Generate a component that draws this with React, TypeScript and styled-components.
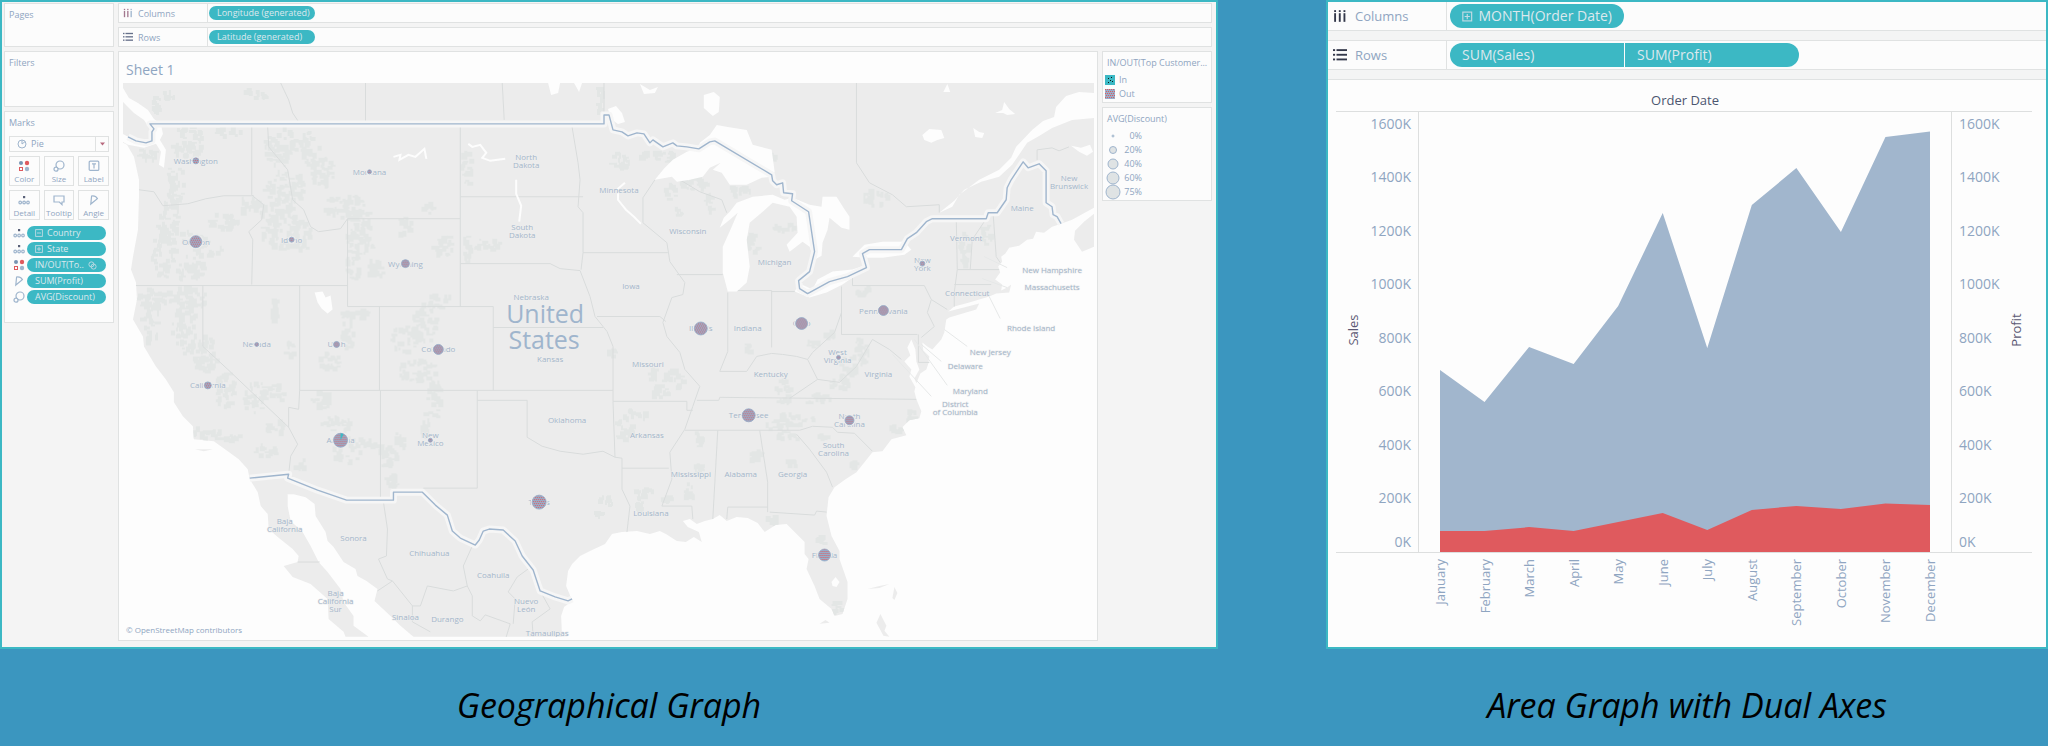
import React from "react";
import styled, { createGlobalStyle } from "styled-components";

const c = {
  page: "#3b96bf",
  teal: "#3cb8c4",
  steel: "#9fb5cd",
  text: "#8fa5c1",
  red: "#df5a5e",
  line: "#e0e2e2",
  chrome: "#f4f4f4",
  card: "#fcfcfc",
  land: "#ececec",
  relief: "#e3e6e5",
  border: "#d9dcdc",
};

const GlobalStyle = createGlobalStyle`
  * { box-sizing: border-box; }
  body {
    margin: 0;
    background: ${c.page};
    font-family: "Open Sans", "Noto Sans", sans-serif;
    color: ${c.text};
  }
  button, select { font: inherit; color: inherit; }
`;

/* ---------- page ---------- */

const Page = styled.main`
  display: grid;
  grid-template-columns: minmax(0, 1218fr) minmax(0, 722fr);
  column-gap: 108px;
  min-height: 100vh;
  align-content: start;
`;

const Figure = styled.figure`
  margin: 0;
  display: flex;
  flex-direction: column;
`;

const Caption = styled.figcaption`
  padding: 32px 0 16px;
  text-align: center;
  font-size: 34px;
  line-height: 48px;
  font-style: italic;
  color: #000;
`;

const Workbook = styled.div`
  flex: 1;
  display: flex;
  gap: 4px;
  padding: 1px 4px 6px 2px;
  border: 2px solid ${c.teal};
  background: ${c.chrome};
`;

/* ---------- side bar ---------- */

const SideBar = styled.aside`
  width: 110px;
  flex: none;
  display: flex;
  flex-direction: column;
  gap: 4px;
`;

const Card = styled.section<{ $height?: number }>`
  min-height: ${(p) => p.$height ?? 0}px;
  border: 1px solid ${c.line};
  background: ${c.card};
  padding: 4px;
`;

const CardTitle = styled.h2`
  margin: 0;
  font-size: 9px;
  line-height: 14px;
  font-weight: 400;
  white-space: nowrap;
`;

const MarkType = styled.label`
  display: flex;
  align-items: center;
  height: 16px;
  margin-top: 6px;
  border: 1px solid ${c.line};
  padding-left: 7px;
`;

const MarkSelect = styled.select`
  flex: 1;
  appearance: none;
  border: 0;
  background: transparent;
  padding: 0 4px;
  font-size: 9px;
  line-height: 14px;
`;

const DropArrow = styled.span`
  width: 13px;
  height: 14px;
  display: grid;
  place-items: center;
  border-left: 1px solid ${c.line};
`;

const MarkGrid = styled.div`
  display: grid;
  grid-template-columns: repeat(3, 1fr);
  gap: 4px;
  margin: 4px 0 6px;
`;

const MarkButton = styled.button`
  height: 30px;
  padding: 3px 0 0;
  border: 1px solid ${c.line};
  background: ${c.card};
  display: flex;
  flex-direction: column;
  align-items: center;
  gap: 1px;
  font-size: 8px;
  line-height: 12px;
`;

const FieldList = styled.ul`
  list-style: none;
  margin: 0;
  padding: 0 3px 0 4px;
  display: flex;
  flex-direction: column;
  gap: 2px;
`;

const FieldRow = styled.li`
  display: grid;
  grid-template-columns: 12px 1fr;
  gap: 2px;
  align-items: center;
`;

const Pill = styled.button<{ $big?: boolean; $width?: number; $side?: "left" | "right" }>`
  height: ${(p) => (p.$big ? 24 : 14)}px;
  width: ${(p) => (p.$width ? `${p.$width}px` : "100%")};
  padding: 0 ${(p) => (p.$big ? 12 : 8)}px;
  border: 0;
  border-radius: ${(p) =>
    p.$side === "left" ? "12px 0 0 12px" : p.$side === "right" ? "0 12px 12px 0" : "12px"};
  background: ${c.teal};
  color: #dce8ee;
  display: flex;
  align-items: center;
  gap: ${(p) => (p.$big ? 6 : 4)}px;
  font-size: ${(p) => (p.$big ? 14 : 9)}px;
  line-height: 14px;
  white-space: nowrap;
  text-align: left;
`;

/* ---------- shelves ---------- */

const Main = styled.div`
  flex: 1;
  min-width: 0;
  display: flex;
  flex-direction: column;
  gap: 4px;
`;

const Shelf = styled.div<{ $big?: boolean }>`
  height: ${(p) => (p.$big ? 29 : 20)}px;
  display: flex;
  align-items: center;
  border: solid ${c.line};
  border-width: ${(p) => (p.$big ? "0 0 1px" : "1px")};
  background: ${c.card};
`;

const ShelfName = styled.div<{ $big?: boolean }>`
  width: ${(p) => (p.$big ? 119 : 89)}px;
  height: 100%;
  flex: none;
  display: flex;
  align-items: center;
  gap: ${(p) => (p.$big ? 8 : 5)}px;
  padding-left: ${(p) => (p.$big ? 5 : 4)}px;
  margin-right: ${(p) => (p.$big ? 3 : 1)}px;
  border-right: 1px solid ${c.line};
  font-size: ${(p) => (p.$big ? 13 : 9)}px;
`;

const Body = styled.div`
  display: flex;
  gap: 4px;
  flex: 1;
`;

const Sheet = styled.section`
  flex: 1;
  min-width: 0;
  border: 1px solid ${c.line};
  background: #fdfdfd;
  padding: 0 3px 3px;
`;

const SheetTitle = styled.h1`
  margin: 0;
  padding: 8px 4px 2px;
  font-size: 14px;
  line-height: 20px;
  font-weight: 400;
`;

const Drawing = styled.svg`
  display: block;
  width: 100%;
  height: auto;
  font-family: "Open Sans", "Noto Sans", sans-serif;
`;

const Legends = styled.aside`
  width: 110px;
  flex: none;
  display: flex;
  flex-direction: column;
  gap: 4px;
`;

const LegendCard = styled(Card)`
  padding: 4px 1px 1px 4px;
`;

const LegendRows = styled.ul`
  list-style: none;
  margin: 3px 0 0;
  padding: 0;
`;

const LegendRow = styled.li`
  height: 14px;
  display: flex;
  align-items: center;
  font-size: 9px;
  line-height: 14px;
`;

const Swatch = styled.svg`
  width: 10px;
  height: 10px;
  margin: 0 4px 0 -2px;
`;

const SizeDot = styled.svg`
  width: 16px;
  height: 16px;
  margin-left: -2px;
  flex: none;
`;

const SizeValue = styled.span`
  width: 21px;
  text-align: right;
`;

/* ---------- area chart card ---------- */

const ChartCard = styled.div`
  flex: 1;
  display: flex;
  flex-direction: column;
  border: 2px solid ${c.teal};
  background: #fdfdfd;
`;

const ShelfGap = styled.div`
  height: 10px;
  background: ${c.chrome};
  border-bottom: 1px solid ${c.line};
`;

const PillJoin = styled.div`
  display: flex;
  gap: 1px;
`;

/* ---------- icons ---------- */

const ink = { fill: "none", stroke: c.steel, strokeWidth: 1.2 } as const;

function ColumnsIcon({ big }: { big?: boolean }) {
  const s = big ? 14 : 10;
  return (
    <svg width={s} height={s} viewBox="0 0 12 12">
      {[2, 6, 10].map((x, i) => (
        <g key={x} fill={big ? "#33384a" : i === 2 ? c.steel : "#a3788f"}>
          <rect x={x - 1} y="1" width="1.6" height="1.6" />
          <rect x={x - 1} y="3.6" width="1.6" height="7.4" />
        </g>
      ))}
    </svg>
  );
}

function RowsIcon({ big }: { big?: boolean }) {
  const s = big ? 14 : 10;
  return (
    <svg width={s} height={s} viewBox="0 0 12 12">
      {[2, 6, 10].map((y) => (
        <g key={y} fill={big ? "#33384a" : "#66708a"}>
          <rect x="0" y={y - 1} width="1.8" height="1.6" />
          <rect x="3" y={y - 1} width="9" height="1.6" />
        </g>
      ))}
    </svg>
  );
}

function ColorIcon() {
  return (
    <svg width="12" height="12" viewBox="0 0 12 12">
      <circle cx="3" cy="3" r="2" fill="#7794b3" />
      <circle cx="9" cy="3" r="2.2" fill={c.red} />
      <rect x="1.5" y="7.5" width="3" height="3" fill="none" stroke={c.red} />
      <circle cx="9" cy="9" r="2.2" fill={c.steel} />
    </svg>
  );
}

function SizeIcon() {
  return (
    <svg width="12" height="12" viewBox="0 0 12 12" {...ink}>
      <circle cx="7" cy="5" r="4" />
      <circle cx="3" cy="9.2" r="2" fill={c.card} />
    </svg>
  );
}

function LabelIcon() {
  return (
    <svg width="12" height="12" viewBox="0 0 12 12" {...ink}>
      <rect x="1.2" y="1.2" width="9.6" height="9.2" rx="1" />
      <path d="M4 3.8h4M6 3.8v4.6" />
    </svg>
  );
}

function DetailIcon() {
  return (
    <svg width="12" height="12" viewBox="0 0 12 12" {...ink}>
      <rect x="5" y="2" width="2.2" height="2.2" fill="#5a6178" stroke="none" />
      <circle cx="2.2" cy="8.5" r="1.3" />
      <circle cx="6.1" cy="8.5" r="1.3" />
      <circle cx="10" cy="8.5" r="1.3" />
    </svg>
  );
}

function TooltipIcon() {
  return (
    <svg width="12" height="12" viewBox="0 0 12 12" {...ink}>
      <path d="M1 2h10v6H9v2.6L6.4 8H1z" />
    </svg>
  );
}

function AngleIcon() {
  return (
    <svg width="12" height="12" viewBox="0 0 12 12" {...ink}>
      <path d="M3.6 2 Q7.6 1.4 9.4 4.6 L2.8 10z" />
    </svg>
  );
}

function PieIcon() {
  return (
    <svg width="10" height="10" viewBox="0 0 12 12" {...ink}>
      <circle cx="6" cy="6" r="4.8" />
      <path d="M6 1.2V6l3.6-2.8" />
    </svg>
  );
}

function ExpandIcon({ size = 8, minus }: { size?: number; minus?: boolean }) {
  return (
    <svg width={size} height={size} viewBox="0 0 10 10" fill="none" stroke="#c3dbe4" strokeWidth="1.1">
      <rect x=".8" y=".8" width="8.4" height="8.4" />
      <path d={minus ? "M2.5 5h5" : "M2.5 5h5M5 2.5v5"} />
    </svg>
  );
}

function SetIcon() {
  return (
    <svg width="9" height="9" viewBox="0 0 10 10" fill="none" stroke="#c3dbe4">
      <circle cx="3.8" cy="3.8" r="2.8" />
      <circle cx="6.2" cy="6.2" r="2.8" />
    </svg>
  );
}

/* ---------- map data ---------- */

const LAND =
  "M122 83H1095V208L1073 220 1062 224 1053 227 1045 233 1037 232 1034 239 1028 240 1020 246 1010 248 1006 254 1002 257 1003 262 999 267 1001 273 996 280 1003 285 1002 291 1008 288 1012 285 1010 293 997 294 990 297 970 303 955 307 949 312 980 304 977 310 950 318 947 320 945 333 942 340 933 350 928 347 923 343 924 351 930 357 929 364 927 370 921 374 917 384 915 379 920 370 917 362 916 350 912 340 908 348 911 356 905 362 912 370 910 377 916 388 915 392 917 400 922 412 920 419 910 421 903 428 907 436 892 440 883 452 873 453 865 463 857 473 846 480 835 488 829 498 827 517 832 537 840 552 840 560 848 583 848 600 843 615 835 617 832 610 820 600 815 587 807 570 809 560 805 555 805 543 797 535 787 525 776 526 765 533 758 524 748 519 737 518 727 522 720 516 713 520 705 522 697 525 690 520 683 522 688 528 699 533 702 543 694 538 686 543 677 542 666 535 660 532 650 535 637 532 622 533 612 535 605 545 590 552 580 557 572 565 568 572 566 587 569 594 572 602 564 608 561 617 562 638H413L400 627 390 617 374 602 377 590 366 582 357 577 355 570 343 563 333 548 327 542 325 533 315 517 314 505 305 498 293 495 287 495 287 507 290 522 302 533 310 547 318 563 327 573 340 590 343 603 353 617 353 627 368 638H345L343 633 328 620 327 600 310 585 292 578 283 567 297 563 298 557 292 550 277 538 268 530 267 515 260 507 257 493 249 480 247 470 238 460 227 452 213 442 193 440 192 427 182 417 173 403 173 393 165 380 155 367 143 347 142 337 132 320 136 300 135 283 130 270 132 257 137 230 138 197 138 180 133 157 126 145 122 143Z";

const WATER = [
  "M122 88 128 98 137 103 147 110 153 119 160 124 162 134 159 140 165 150 163 168 158 165 160 152 155 144 143 148 127 145 122 142 122 134 131 139 145 141 150 138 149 129 143 120 133 113 122 102Z",
  "M655 180 664 169 673 160 687 152 699 148 700 143 710 135 717 125 728 127 747 130 753 145 772 150 775 172 772 177 762 178 747 185 730 185 722 173 713 170 721 163 710 168 703 177 690 180 677 182 672 177Z",
  "M720 228 724 218 730 212 737 203 753 197 773 195 785 200 793 198 810 205 822 207 823 197 837 197 844 208 850 217 850 230 842 228 830 218 828 230 823 243 822 256 815 260 810 247 803 242 790 252 787 245 798 233 797 217 790 207 773 203 763 212 750 223 747 240 750 267 747 283 737 292 728 292 723 273 723 247 732 227 738 213 730 220Z",
  "M795 292 800 284 813 290 818 280 833 272 853 270 868 265 862 272 843 285 827 293 810 298Z",
  "M853 257 865 245 883 242 905 242 912 250 905 255 883 258 867 258Z",
  "M1095 93 1080 92 1067 96 1057 107 1055 117 1044 121 1033 130 1017 147 1012 158 1000 170 980 180 960 195 953 207 940 213 955 201 965 190 982 182 1000 177 1013 165 1028 143 1040 136 1053 128 1073 120 1095 118Z",
  "M704 95 714 92 720 97 719 112 713 116 704 108Z",
  "M608 109 616 106 622 113 625 122 618 124 611 119Z",
  "M548 83H560L558 93 551 95Z",
  "M574 83H582L579 92Z",
  "M640 84 650 90 658 87 655 93 644 94Z",
  "M314 293 322 292 325 298 330 296 332 310 327 314 321 309 317 303Z",
  "M832 583 836 578 840 583 837 588 833 587Z",
  "M923 135 930 129 942 130 945 138 938 140 932 143 925 140Z",
  "M974 128 980 132 985 133 983 138 976 137Z",
  "M996 113 1003 110 1005 102 1010 109 1016 114 1008 115 1004 113Z",
  "M944 92 948 84 951 92Z",
  "M1072 146 1082 148 1091 145 1094 152 1088 156 1080 152Z",
];

const ISLANDS = [
  "M1095 214 1085 222 1076 231 1075 240 1083 252 1095 247Z",
  "M877 624 881 615 887 627 885 632 890 638 884 637Z",
  "M868 590 880 587 890 585 880 589Z",
  "M895 588 898 594 895 601 893 599Z",
  "M820 625 826 621 830 624Z",
  "M194 450 212 450 203 452Z",
];

const RIVERS = [
  "M393 157 400 155 399 160 408 155 415 157 424 149 426 159",
  "M468 144 472 147 480 145 486 153 482 158 490 161 505 159",
  "M516 180V194L521 206 519 222",
  "M625 183 618 189 618 200 626 210 634 217 641 224",
];

const STATE_LINES = [
  "M251 127V195L253 197 263 205 261 220 248 232 252 240 251 285",
  "M138 190 153 192 162 206 187 204 205 199 223 196H253",
  "M135 286H347",
  "M202 286V347L227 370 288 428 297 445 290 457 288 475",
  "M288 428V408L298 410 299 391V286",
  "M299 391H613",
  "M380 391V501M379 307V391",
  "M347 307V219H460M460 127V307M347 307H493V391",
  "M267 127 268 147 287 170 292 200 303 210 310 227 318 232 340 229 347 219",
  "M460 197H583M460 264H550L560 269 580 271 590 297 595 317 607 332 613 347V402",
  "M493 328H603",
  "M613 402 615 458 622 459V490L630 507 627 533",
  "M572 127 578 163 580 180 578 207 583 213V253L581 270",
  "M583 253H668M597 317H660L666 322",
  "M655 180 643 198 643 223 667 243 670 262 685 283 683 295 672 298 663 323 667 337 680 353 685 370 700 387 693 407 685 430 670 453 672 480 662 507H692L693 520",
  "M677 275H723M680 180 700 192 722 200 727 213",
  "M728 293V352L720 372 747 372 757 357 772 354 783 355 797 357 808 360 813 353 835 333 842 313",
  "M737 291H772V348M772 292H797",
  "M842 287V335H918M853 272V286H925L932 300 928 313 935 327 922 338",
  "M932 300 948 310M919 335V363H930",
  "M957 220 958 270 955 293V307M987 219 973 240 971 270M958 270H1000M955 285H992M994 215 997 257 1001 263",
  "M697 401H719L720 398 917 400M685 431H800",
  "M818 380 790 399M818 380 808 360M818 380 840 383 857 367 873 340 890 350 902 360",
  "M613 402H687V411H693M622 469H669",
  "M718 431 713 520M760 431 768 483V513M727 520 728 508H768",
  "M770 513 815 516 817 512 827 513",
  "M797 435 810 450 827 473 833 488M800 431 813 427 833 428 838 433 855 434 873 452",
  "M423 489H477V391M477 401H527V438L542 447 560 452 583 455 603 452 615 458",
  "M365 83V123M502 83 504 120M280 83 288 100 292 113 298 122M604 83V115",
  "M857 83V163L870 183 893 195 907 207 940 205V213",
  "M1038 160V150L1053 148 1060 151 1070 147",
  "M383 503 387 530 386 557 378 560 387 580 392 582 377 592M392 582 412 607 412 623 430 633M412 607H420L427 587 453 592 467 587",
  "M472 547 463 567 467 587 472 597V617L480 622 485 616 510 625 506 638",
  "M528 570 517 578 508 593 515 600 513 625M540 592 550 610 532 623 533 638M297 563H319",
];

const LEADERS = "M985 257 1008 268M983 279 1008 288M990 297 1001 319M945 330 968 347M922 345 942 362M915 340 948 386M893 355 932 397";

const NATIONAL = [
  "M127 137 135 141 145 143 151 141V132L153 129 149 124H604V115H609L613 130 622 132 628 136 637 133 644 134 650 143 653 140 663 147 673 143 677 146 687 147 699 149 710 142 715 141 772 175 773 181 777 185 783 183 784 193 793 194 792 201 809 212 815 252 810 272 799 281 800 289 808 294 830 282 848 277 867 268 863 254 870 250H902L908 239 917 233 927 222 933 219H987L989 213 998 213 1007 200 1008 188 1012 180 1024 162 1029 168 1040 164 1047 171V203L1053 207 1054 215 1058 217 1062 224",
  "M249 479 288 475 287 479 317 491 346 501H393V493H422L435 506 447 516 452 532 460 539 475 546 479 541 483 532 489 530 503 531 515 542 522 557 533 571 540 592 555 598 568 602 572 600",
];

/* Wooded and mountain areas: centre x, centre y, half width, half height */
const RELIEF: number[][] = [
  [187, 143, 17, 17], [175, 185, 9, 20], [167, 220, 11, 24], [163, 255, 12, 25], [190, 270, 14, 14], [147, 155, 9, 8],
  [150, 300, 13, 11], [185, 298, 24, 11], [185, 330, 13, 24], [205, 355, 15, 18], [225, 390, 10, 20], [255, 398, 12, 16],
  [150, 320, 9, 24], [228, 132, 12, 5], [280, 148, 17, 19], [285, 190, 20, 20], [280, 225, 20, 28], [250, 207, 12, 10],
  [310, 148, 10, 19], [322, 172, 12, 16], [345, 207, 22, 11], [300, 235, 12, 18], [222, 222, 16, 9], [190, 238, 14, 6],
  [207, 250, 14, 8], [360, 238, 14, 22], [353, 268, 7, 14], [375, 268, 10, 10], [405, 227, 8, 10], [442, 245, 12, 12],
  [355, 215, 18, 5], [425, 325, 13, 20], [405, 340, 13, 14], [440, 302, 12, 7], [418, 372, 20, 11], [357, 315, 17, 4],
  [348, 330, 7, 20], [330, 362, 11, 10], [276, 312, 4, 12], [290, 350, 5, 10], [277, 393, 8, 10], [275, 427, 9, 9],
  [321, 400, 10, 9], [336, 425, 15, 8], [347, 452, 13, 13], [300, 465, 5, 6], [367, 445, 13, 5], [388, 458, 10, 14],
  [436, 400, 8, 20], [402, 440, 9, 9], [392, 482, 7, 9], [425, 428, 4, 16], [205, 435, 16, 6], [230, 440, 13, 4],
  [265, 452, 14, 5], [467, 170, 6, 17], [488, 245, 14, 6], [467, 250, 4, 15], [621, 162, 10, 10], [665, 157, 13, 6],
  [645, 157, 6, 4], [671, 192, 6, 9], [696, 184, 15, 8], [710, 205, 4, 11], [679, 213, 4, 4], [740, 192, 10, 6],
  [754, 243, 7, 12], [785, 228, 10, 5], [876, 199, 13, 8], [774, 158, 3, 5], [600, 100, 4, 14], [865, 293, 7, 6],
  [862, 352, 8, 14], [848, 370, 9, 12], [784, 393, 8, 13], [795, 420, 20, 6], [780, 426, 13, 6], [818, 400, 14, 5],
  [838, 386, 12, 5], [675, 380, 11, 9], [660, 393, 9, 7], [625, 430, 9, 13], [637, 415, 10, 6], [606, 502, 7, 6],
  [600, 516, 6, 4], [645, 495, 9, 7], [640, 508, 6, 5], [667, 500, 6, 4], [699, 470, 7, 5], [690, 492, 5, 9],
  [699, 440, 5, 7], [757, 457, 6, 7], [792, 465, 5, 4], [790, 437, 12, 5], [774, 522, 8, 5], [822, 541, 6, 5],
  [838, 609, 6, 6], [856, 466, 5, 4], [825, 437, 4, 5], [965, 250, 5, 20], [988, 235, 5, 12], [912, 417, 6, 5],
  [897, 431, 7, 4], [157, 105, 5, 9], [169, 95, 6, 4], [247, 91, 4, 4], [260, 96, 7, 5], [428, 208, 6, 6],
  [814, 345, 6, 5], [830, 336, 4, 5], [748, 350, 4, 6], [613, 355, 5, 4], [654, 375, 5, 6],
];

/* Builds one area from small overlapping patches, so that its edge is broken */
function patches([x, y, rx, ry]: number[], seed: number) {
  let s = seed * 7919 + 17;
  const next = () => {
    s = (s * 16807) % 2147483647;
    return s / 2147483647;
  };
  next();
  const count = Math.round((rx * ry) / 6) + 5;
  let d = "";
  for (let i = 0; i < count; i++) {
    const a = next() * Math.PI * 2;
    const k = Math.sqrt(next());
    const w = 2 + Math.round(next() * 4);
    const h = 2 + Math.round(next() * 4);
    const left = Math.round(x + Math.cos(a) * rx * k - w / 2);
    const top = Math.round(y + Math.sin(a) * ry * k - h / 2);
    d += `M${left} ${top}h${w}v${h}h${-w}z`;
  }
  return d;
}

const RELIEF_PATH = RELIEF.map((r, i) => patches(r, i + 1)).join("");

type Place = [number, number, ...string[]];

const PLACES: Place[] = [
  [195, 161, "Washington"], [369, 172, "Montana"], [195, 242, "Oregon"], [291, 240, "Idaho"], [405, 264, "Wyoming"],
  [256, 345, "Nevada"], [336, 345, "Utah"], [438, 350, "Colorado"], [207, 386, "California"], [340, 441, "Arizona"],
  [430, 440, "New", "Mexico"], [539, 503, "Texas"], [701, 329, "Illinois"], [802, 324, "Ohio"], [884, 311, "Pennsylvania"],
  [838, 357, "West", "Virginia"], [923, 264, "New", "York"], [749, 416, "Tennessee"], [850, 421, "North", "Carolina"],
  [825, 556, "Florida"], [526, 161, "North", "Dakota"], [619, 190, "Minnesota"], [688, 231, "Wisconsin"],
  [775, 262, "Michigan"], [631, 286, "Iowa"], [531, 297, "Nebraska"], [522, 231, "South", "Dakota"], [550, 360, "Kansas"],
  [648, 365, "Missouri"], [748, 329, "Indiana"], [771, 375, "Kentucky"], [879, 375, "Virginia"], [967, 238, "Vermont"],
  [968, 293, "Connecticut"], [1023, 208, "Maine"], [1070, 182, "New", "Brunswick"], [1053, 270, "New Hampshire"],
  [1053, 287, "Massachusetts"], [1032, 329, "Rhode Island"], [991, 353, "New Jersey"], [966, 367, "Delaware"],
  [971, 392, "Maryland"], [956, 409, "District", "of Columbia"], [567, 421, "Oklahoma"], [647, 436, "Arkansas"],
  [651, 514, "Louisiana"], [691, 475, "Mississippi"], [741, 475, "Alabama"], [793, 475, "Georgia"],
  [834, 450, "South", "Carolina"], [284, 526, "Baja", "California"], [353, 539, "Sonora"], [429, 554, "Chihuahua"],
  [493, 576, "Coahuila"], [526, 606, "Nuevo", "León"], [405, 618, "Sinaloa"], [447, 620, "Durango"],
  [335, 602, "Baja", "California", "Sur"], [547, 634, "Tamaulipas"],
];

const PIES: [number, number, number][] = [
  [195, 161, 3], [369, 172, 2], [195, 242, 6], [291, 240, 2.5], [405, 264, 4], [256, 345, 2], [336, 345, 3],
  [438, 350, 5], [207, 386, 3.5], [340, 441, 7], [430, 441, 2], [539, 503, 7], [701, 329, 6.5], [802, 324, 6],
  [884, 311, 5], [839, 358, 2], [923, 264, 2.5], [749, 416, 6.5], [850, 421, 4.5], [825, 556, 6],
];

function PieTexture() {
  return (
    <pattern id="pie" width="4" height="4" patternUnits="userSpaceOnUse">
      <rect width="4" height="4" fill="#97aecb" />
      <rect x="0" y="0" width="1" height="1" fill={c.red} />
      <rect x="2" y="0" width="1" height="1" fill={c.red} />
      <rect x="1" y="2" width="1" height="1" fill={c.red} />
      <rect x="3" y="2" width="1" height="1" fill={c.red} />
    </pattern>
  );
}

function GeoMap() {
  return (
    <Drawing viewBox="121 82 974 556" role="img" aria-label="Discount and profit by state">
      <defs>
        <PieTexture />
        <clipPath id="landClip">
          <path d={LAND} />
        </clipPath>
      </defs>
      <rect x="121" y="82" width="974" height="556" fill="#fdfdfd" />
      <path d={LAND} fill={c.land} />
      <path d={RELIEF_PATH} fill={c.relief} clipPath="url(#landClip)" />
      <g fill="none" stroke={c.border}>
        {STATE_LINES.map((d) => (
          <path key={d} d={d} />
        ))}
        <path d={LEADERS} stroke="#e6e8e8" />
      </g>
      <g fill="#fdfdfd">
        {WATER.map((d) => (
          <path key={d} d={d} />
        ))}
      </g>
      <g fill={c.land}>
        {ISLANDS.map((d) => (
          <path key={d} d={d} />
        ))}
      </g>
      <g fill="none" stroke="#fdfdfd" strokeWidth="2">
        {RIVERS.map((d) => (
          <path key={d} d={d} />
        ))}
      </g>
      <g fill="none" strokeLinejoin="round">
        {NATIONAL.map((d) => (
          <path key={d} d={d} stroke="#f6f6f6" strokeWidth="7" />
        ))}
        {NATIONAL.map((d) => (
          <path key={d} d={d} stroke={c.steel} strokeWidth="1.4" />
        ))}
      </g>
      <g fontSize="8" textAnchor="middle" fill="#a3b5c9" stroke="#efefef" strokeWidth="1" paintOrder="stroke">
        {PLACES.map(([x, y, ...lines]) =>
          lines.map((t, i) => (
            <text key={`${t}${x}`} x={x} y={y + 3 + (i - (lines.length - 1) / 2) * 8}>
              {t}
            </text>
          ))
        )}
      </g>
      <g fontSize="25" textAnchor="middle" fill={c.steel}>
        <text x="545" y="324">United</text>
        <text x="544" y="350">States</text>
      </g>
      {PIES.map(([x, y, r]) => (
        <g key={`${x}-${y}`}>
          <circle cx={x} cy={y} r={r + 1.5} fill={c.land} />
          <circle cx={x} cy={y} r={r} fill="url(#pie)" stroke="#93abc8" strokeWidth=".8" />
        </g>
      ))}
      <path d="M340 441V434A7 7 0 0 1 343 435Z" fill={c.teal} />
      <text x="125" y="634" fontSize="8" fill={c.text}>
        © OpenStreetMap contributors
      </text>
    </Drawing>
  );
}

/* ---------- area chart ---------- */

const MONTHS: [string, number, number][] = [
  ["January", 680, 78], ["February", 560, 78], ["March", 766, 93], ["April", 702, 78], ["May", 919, 112],
  ["June", 1266, 146], ["July", 762, 82], ["August", 1296, 157], ["September", 1434, 172], ["October", 1195, 161],
  ["November", 1550, 181], ["December", 1571, 176],
];
const TICKS = [0, 200, 400, 600, 800, 1000, 1200, 1400, 1600];
const BASE = 473;
const px = (i: number) => 112 + (i * 490) / 11;
const py = (v: number) => BASE - v * 0.2677;

function area(values: number[]) {
  return `M${px(0)} ${BASE}${values.map((v, i) => `L${px(i)} ${py(v)}`).join("")}L${px(11)} ${BASE}Z`;
}

function AreaChart() {
  return (
    <Drawing viewBox="0 1 718 566" role="img" aria-label="Sales and profit by month">
      <text x="357" y="26" fontSize="13" textAnchor="middle" fill="#4c5670">
        Order Date
      </text>
      <path d="M8 32.5H704M8 473.5H704M90.5 32V473M623.5 32V473" stroke="#dddfdf" strokeWidth="1" />
      <path d={area(MONTHS.map((m) => m[1]))} fill="#a1b6cd" />
      <path d={area(MONTHS.map((m) => m[2]))} fill={c.red} />
      <g fontSize="14" fill={c.text}>
        {TICKS.map((t) => {
          const y = t === 0 ? 468 : py(t) + 5;
          return (
            <g key={t}>
              <text x="83" y={y} textAnchor="end">{t}K</text>
              <text x="631" y={y}>{t}K</text>
            </g>
          );
        })}
      </g>
      <g fontSize="13" fill={c.text} textAnchor="end">
        {MONTHS.map(([name], i) => (
          <text key={name} transform={`translate(${px(i) + 5} 480) rotate(-90)`}>
            {name}
          </text>
        ))}
      </g>
      <g fontSize="13" fill="#5a5873" textAnchor="middle">
        <text transform="translate(30 251) rotate(-90)">Sales</text>
        <text transform="translate(693 251) rotate(-90)">Profit</text>
      </g>
    </Drawing>
  );
}

/* ---------- composition ---------- */

const MARK_BUTTONS: [string, React.ReactNode][] = [
  ["Color", <ColorIcon />], ["Size", <SizeIcon />], ["Label", <LabelIcon />],
  ["Detail", <DetailIcon />], ["Tooltip", <TooltipIcon />], ["Angle", <AngleIcon />],
];

function MarksCard() {
  return (
    <Card $height={212}>
      <CardTitle>Marks</CardTitle>
      <MarkType>
        <PieIcon />
        <MarkSelect aria-label="Mark type" defaultValue="Pie">
          <option>Pie</option>
        </MarkSelect>
        <DropArrow>
          <svg width="5" height="4" viewBox="0 0 5 4">
            <path d="M0 .5H5L2.5 3.5Z" fill="#b8697e" />
          </svg>
        </DropArrow>
      </MarkType>
      <MarkGrid>
        {MARK_BUTTONS.map(([name, icon]) => (
          <MarkButton key={name} type="button">
            {icon}
            {name}
          </MarkButton>
        ))}
      </MarkGrid>
      <FieldList>
        <FieldRow><DetailIcon /><Pill type="button"><ExpandIcon minus />Country</Pill></FieldRow>
        <FieldRow><DetailIcon /><Pill type="button"><ExpandIcon />State</Pill></FieldRow>
        <FieldRow><ColorIcon /><Pill type="button">IN/OUT(To.. <SetIcon /></Pill></FieldRow>
        <FieldRow><AngleIcon /><Pill type="button">SUM(Profit)</Pill></FieldRow>
        <FieldRow><SizeIcon /><Pill type="button">AVG(Discount)</Pill></FieldRow>
      </FieldList>
    </Card>
  );
}

const SIZES: [string, number][] = [["0%", 1], ["20%", 3.5], ["40%", 5], ["60%", 6], ["75%", 7]];

export default function App() {
  return (
    <>
      <GlobalStyle />
      <Page>
        <Figure>
          <Workbook>
            <SideBar>
              <Card $height={44}><CardTitle>Pages</CardTitle></Card>
              <Card $height={56}><CardTitle>Filters</CardTitle></Card>
              <MarksCard />
            </SideBar>
            <Main>
              <Shelf>
                <ShelfName><ColumnsIcon />Columns</ShelfName>
                <Pill type="button" $width={106}>Longitude (generated)</Pill>
              </Shelf>
              <Shelf>
                <ShelfName><RowsIcon />Rows</ShelfName>
                <Pill type="button" $width={106}>Latitude (generated)</Pill>
              </Shelf>
              <Body>
                <Sheet>
                  <SheetTitle>Sheet 1</SheetTitle>
                  <GeoMap />
                </Sheet>
                <Legends>
                  <LegendCard $height={52}>
                    <CardTitle>IN/OUT(Top Customer...</CardTitle>
                    <LegendRows>
                      <LegendRow>
                        <Swatch viewBox="0 0 10 10">
                          <rect width="10" height="10" fill={c.teal} />
                          <path d="M3 3h1v1H3zM6 2h1v1H6zM5 5h1v1H5zM7 6h1v1H7zM3 7h1v1H3z" fill="#111" />
                        </Swatch>
                        In
                      </LegendRow>
                      <LegendRow>
                        <Swatch viewBox="0 0 10 10"><rect width="10" height="10" fill="url(#pie)" /></Swatch>
                        Out
                      </LegendRow>
                    </LegendRows>
                  </LegendCard>
                  <LegendCard $height={94}>
                    <CardTitle>AVG(Discount)</CardTitle>
                    <LegendRows>
                      {SIZES.map(([label, r]) => (
                        <LegendRow key={label}>
                          <SizeDot viewBox="0 0 16 16">
                            <circle cx="8" cy="8" r={r} fill="#dfe3e4" stroke={c.steel} strokeWidth="1" />
                          </SizeDot>
                          <SizeValue>{label}</SizeValue>
                        </LegendRow>
                      ))}
                    </LegendRows>
                  </LegendCard>
                </Legends>
              </Body>
            </Main>
          </Workbook>
          <Caption>Geographical Graph</Caption>
        </Figure>
        <Figure>
          <ChartCard>
            <Shelf $big>
              <ShelfName $big><ColumnsIcon big />Columns</ShelfName>
              <Pill type="button" $big $width={174}><ExpandIcon size={11} />MONTH(Order Date)</Pill>
            </Shelf>
            <ShelfGap />
            <Shelf $big>
              <ShelfName $big><RowsIcon big />Rows</ShelfName>
              <PillJoin>
                <Pill type="button" $big $width={174} $side="left">SUM(Sales)</Pill>
                <Pill type="button" $big $width={174} $side="right">SUM(Profit)</Pill>
              </PillJoin>
            </Shelf>
            <ShelfGap />
            <AreaChart />
          </ChartCard>
          <Caption>Area Graph with Dual Axes</Caption>
        </Figure>
      </Page>
    </>
  );
}
